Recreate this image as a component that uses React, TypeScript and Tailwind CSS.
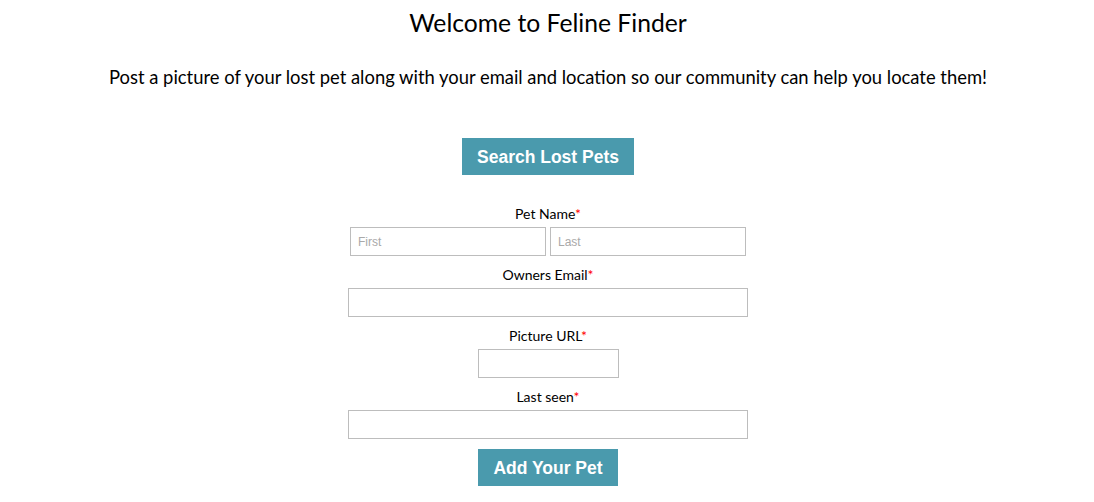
export default function App() {
  const label = "text-[14px] leading-[18px] text-black";
  const input =
    "h-[29px] border border-[#bdbdbd] bg-white px-[7px] text-[12px] text-black font-['Liberation_Sans',Arial,sans-serif] placeholder:text-[#a9a9a9] outline-none";
  const button =
    "h-[37px] bg-[#4a9aad] text-white font-bold text-[17.5px] leading-[38px] font-['Liberation_Sans',Arial,sans-serif]";

  return (
    <div className="min-h-screen bg-white pl-[2px] font-['Lato',sans-serif] text-black flex flex-col items-center">
      <h1 className="mt-[9px] text-[24.7px] leading-[28px] font-normal">Welcome to Feline Finder</h1>
      <p className="mt-[28px] text-[18.4px] leading-[24px]">
        Post a picture of your lost pet along with your email and location so our community can help you locate them!
      </p>

      <button className={`${button} mt-[49px] w-[172px]`}>Search Lost Pets</button>

      <form className="mt-[30px] flex flex-col items-center">
        <label className={label}>
          Pet Name<span className="text-[#ff0000]">*</span>
        </label>
        <div className="mt-[4px] flex gap-[4px]">
          <input className={`${input} w-[196px]`} placeholder="First" />
          <input className={`${input} w-[196px]`} placeholder="Last" />
        </div>

        <label className={`${label} mt-[10px]`}>
          Owners Email<span className="text-[#ff0000]">*</span>
        </label>
        <input className={`${input} mt-[4px] w-[400px]`} />

        <label className={`${label} mt-[10px]`}>
          Picture URL<span className="text-[#ff0000]">*</span>
        </label>
        <input className={`${input} mt-[4px] w-[141px]`} />

        <label className={`${label} mt-[10px]`}>
          Last seen<span className="text-[#ff0000]">*</span>
        </label>
        <input className={`${input} mt-[4px] w-[400px]`} />

        <button type="button" className={`${button} mt-[10px] w-[140px]`}>
          Add Your Pet
        </button>
      </form>
    </div>
  );
}
